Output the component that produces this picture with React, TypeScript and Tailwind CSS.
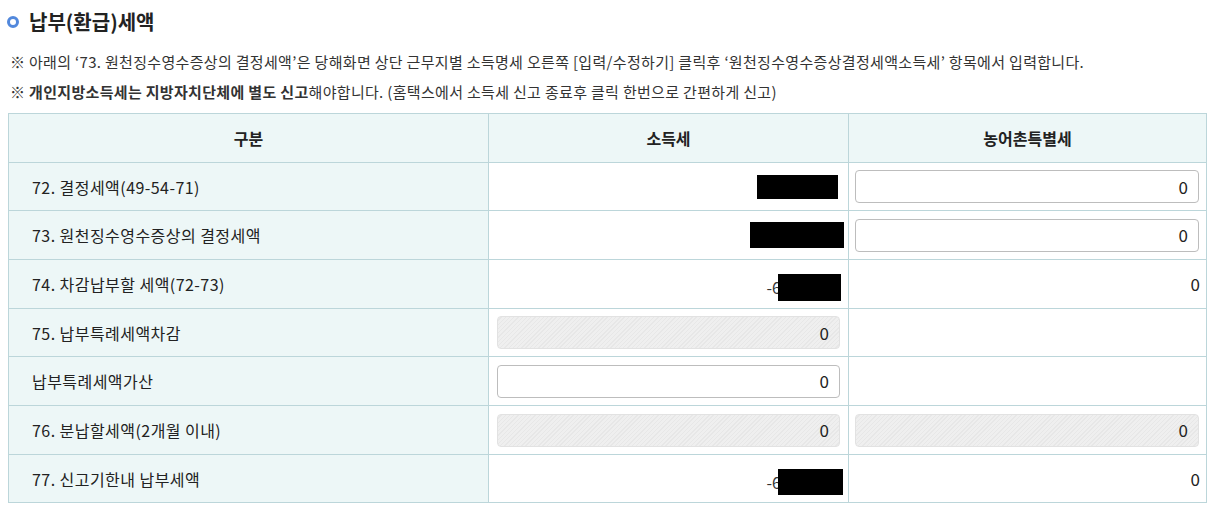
import React from "react";

const font = { fontFamily: '"Noto Sans CJK KR", "Noto Sans", sans-serif' };

function Redact({ w, h, dash }: { w: number; h: number; dash?: boolean }) {
  return (
    <span className="inline-flex items-center justify-end">
      {dash && <span className="text-[16px] text-[#333] mr-[-3px]">-6</span>}
      <span className="inline-block bg-black" style={{ width: w, height: h }} />
    </span>
  );
}

function Input({ disabled }: { disabled?: boolean }) {
  return (
    <div
      className={
        "h-[33px] w-full rounded-[4px] border flex items-center justify-end pr-[10px] text-[17px] text-[#222] " +
        (disabled
          ? "border-[#e2e2e2] bg-[repeating-linear-gradient(135deg,#efefef_0px,#efefef_2px,#e7e7e7_2px,#e7e7e7_3px)]"
          : "border-[#bdbdbd] bg-white")
      }
    >
      0
    </div>
  );
}

type Row = { label: string; h: string; c2: React.ReactNode; c3: React.ReactNode };

const rows: Row[] = [
  {
    label: "72. 결정세액(49-54-71)",
    h: "h-[48px]",
    c2: <div className="flex justify-end pr-[10px]"><Redact w={81} h={24} /></div>,
    c3: <div className="pl-[6px] pr-[7px]"><Input /></div>,
  },
  {
    label: "73. 원천징수영수증상의 결정세액",
    h: "h-[49px]",
    c2: <div className="flex justify-end pr-[4px]"><Redact w={94} h={26} /></div>,
    c3: <div className="pl-[6px] pr-[7px]"><Input /></div>,
  },
  {
    label: "74. 차감납부할 세액(72-73)",
    h: "h-[49px]",
    c2: <div className="flex justify-end pr-[7px] pt-[6px]"><Redact w={63} h={27} dash /></div>,
    c3: <div className="text-right pr-[6px] text-[17px] text-[#222]">0</div>,
  },
  {
    label: "75. 납부특례세액차감",
    h: "h-[48px]",
    c2: <div className="pl-[8px] pr-[8px]"><Input disabled /></div>,
    c3: null,
  },
  {
    label: "납부특례세액가산",
    h: "h-[49px]",
    c2: <div className="pl-[8px] pr-[8px]"><Input /></div>,
    c3: null,
  },
  {
    label: "76. 분납할세액(2개월 이내)",
    h: "h-[49px]",
    c2: <div className="pl-[8px] pr-[8px]"><Input disabled /></div>,
    c3: <div className="pl-[6px] pr-[7px]"><Input disabled /></div>,
  },
  {
    label: "77. 신고기한내 납부세액",
    h: "h-[47px]",
    c2: <div className="flex justify-end pr-[5px] pt-[6px]"><Redact w={65} h={26} dash /></div>,
    c3: <div className="text-right pr-[6px] text-[17px] text-[#222]">0</div>,
  },
];

export default function App() {
  return (
    <div className="w-[1216px] h-[506px] bg-white overflow-hidden" style={font}>
      <div className="flex items-center pl-[7px] pt-[11px] h-[33px]">
        <span className="inline-block w-[12px] h-[12px] rounded-full border-[3px] border-[#5288dc] mr-[10px]" />
        <span className="text-[20px] font-bold text-[#222] leading-none">납부(환급)세액</span>
      </div>
      <div className="pl-[10px] mt-[14px] text-[15px] tracking-[0.32px] text-[#333] leading-[30px]">
        <div>
          ※ 아래의 ‘73. 원천징수영수증상의 결정세액’은 당해화면 상단 근무지별 소득명세 오른쪽 [입력/수정하기] 클릭후 ‘원천징수영수증상결정세액소득세’ 항목에서 입력합니다.
        </div>
        <div>
          <span className="font-bold">※ 개인지방소득세는 지방자치단체에 별도 신고</span>해야합니다. (홈택스에서 소득세 신고 종료후 클릭 한번으로 간편하게 신고)
        </div>
      </div>
      <div className="ml-[8px] mt-[6px] w-[1199px] border border-[#bcd6da]">
        <div className="grid grid-cols-[480px_360px_1fr] h-[49px] bg-[#edf7f7] border-b border-[#bcd6da] text-[16px] font-bold text-[#222]">
          <div className="flex items-center justify-center border-r border-[#bcd6da]">구분</div>
          <div className="flex items-center justify-center border-r border-[#bcd6da]">소득세</div>
          <div className="flex items-center justify-center">농어촌특별세</div>
        </div>
        {rows.map((r, i) => (
          <div
            key={i}
            className={
              "grid grid-cols-[480px_360px_1fr] " +
              r.h +
              (i < rows.length - 1 ? " border-b border-[#bcd6da]" : "")
            }
          >
            <div className="flex items-center pl-[23px] bg-[#edf7f7] border-r border-[#bcd6da] text-[16px] tracking-[0.45px] text-[#222]">
              {r.label}
            </div>
            <div className="flex flex-col justify-center border-r border-[#bcd6da]">{r.c2}</div>
            <div className="flex flex-col justify-center">{r.c3}</div>
          </div>
        ))}
      </div>
    </div>
  );
}
